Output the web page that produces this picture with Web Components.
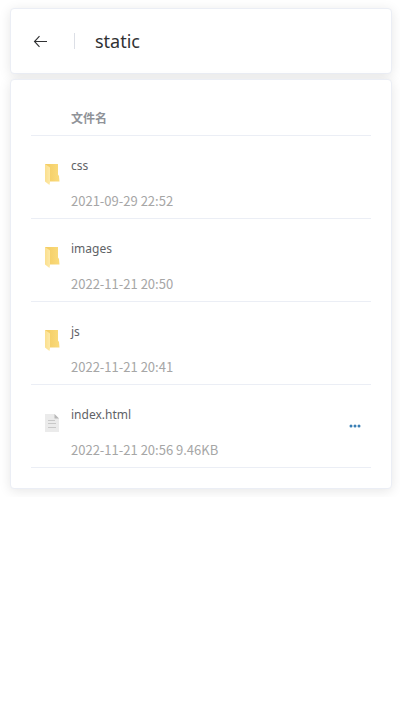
<!DOCTYPE html>
<html lang="zh-CN">
<head>
<meta charset="utf-8">
<meta name="viewport" content="width=device-width, initial-scale=1">
<title>static</title>
<style>
body { margin: 0; background: #fff; font: 13px/23px "Noto Sans CJK SC", "Noto Sans", sans-serif; color: #606266; }
</style>
</head>
<body>
<file-browser>
  <panel-card><page-header heading="static"></page-header></panel-card>
  <panel-card><file-table></file-table></panel-card>
</file-browser>
<script>
class BaseElement extends HTMLElement {
  render(html) {
    const template = document.createElement('template');
    template.innerHTML = html;
    this.attachShadow({ mode: 'open' }).append(template.content.cloneNode(true));
  }
}

customElements.define('file-browser', class extends BaseElement {
  constructor() {
    super();
    this.render(`<style>
      :host { display: block; padding: 8px 8px 8px 10px; }
      main { display: flex; flex-direction: column; gap: 5px; }
    </style><main><slot></slot></main>`);
  }
});

customElements.define('panel-card', class extends BaseElement {
  constructor() {
    super();
    this.render(`<style>
      :host { display: block; padding: 20px; background: #fff; border: 1px solid #ebeef5; border-radius: 4px; box-shadow: 0 2px 12px rgba(0,0,0,.1); }
    </style><slot></slot>`);
  }
});

customElements.define('page-header', class extends BaseElement {
  connectedCallback() {
    if (this.shadowRoot) return;
    this.render(`<style>
      :host { display: block; }
      header { display: flex; align-items: center; height: 24px; }
      button { display: flex; padding: 0; border: 0; background: none; color: #303133; cursor: pointer; }
      i { width: 1px; height: 16px; margin: 0 20px 0 24px; background: #dcdfe6; }
      h1 { margin: 0; font: 400 18px/24px "Noto Sans", "Noto Sans CJK SC", sans-serif; color: #303133; }
    </style>
    <header>
      <button type="button" aria-label="返回">
        <svg width="19" height="18" viewBox="0 0 19 18" fill="none" stroke="currentColor" stroke-width="1.1"><path d="M16 9.500H3.500M8.500 4.200 3.500 9.500l5 5.300"/></svg>
      </button>
      <i></i><h1></h1>
    </header>`);
    this.shadowRoot.querySelector('h1').textContent = this.getAttribute('heading');
  }
});

const ICONS = {
  folder: `<svg width="18" height="24" viewBox="0 0 18 24">
    <defs><linearGradient id="b" x2="1"><stop stop-color="#f3cb62"/><stop offset="1" stop-color="#fadb7c"/></linearGradient>
    <linearGradient id="f" x2="1"><stop stop-color="#fbdf8e"/><stop offset="1" stop-color="#fde9a8"/></linearGradient></defs>
    <path d="M2 2h13v10.500l1 1.500.5 5.500H4z" fill="url(#b)"/>
    <path d="M2 2l5 3.500v15L6.500 23 2 19.500z" fill="url(#f)"/></svg>`,
  file: `<svg width="18" height="24" viewBox="0 0 18 24">
    <path d="M2 3h9.500L16 7.500V21H2z" fill="#ebebeb"/><path d="M11.500 3L16 7.500h-4.500z" fill="#b8b8b8"/>
    <path d="M5 9.500h7M5 12.500h8M5 16.500h8" stroke="#c8c8c8"/></svg>`
};

customElements.define('file-icon', class extends BaseElement {
  connectedCallback() {
    if (this.shadowRoot) return;
    this.render(`<style>:host { display: block; } svg { display: block; }</style>${ICONS[this.getAttribute('kind')]}`);
  }
});

const FILES = [
  { kind: 'folder', name: 'css', meta: '2021-09-29 22:52' },
  { kind: 'folder', name: 'images', meta: '2022-11-21 20:50' },
  { kind: 'folder', name: 'js', meta: '2022-11-21 20:41' },
  { kind: 'file', name: 'index.html', meta: '2022-11-21 20:56 9.46KB' }
];

customElements.define('file-table', class extends BaseElement {
  constructor() {
    super();
    this.render(`<style>
      :host { display: block; }
      table { width: 100%; border-collapse: separate; border-spacing: 0; table-layout: fixed; }
      th, td { padding: 0; border-bottom: 1px solid #ebeef5; text-align: left; }
      th { padding: 6px 0; color: #909399; font-size: 12px; line-height: 23px; }
      .icon { width: 40px; }
      .more { width: 32px; }
      td { vertical-align: top; }
      td:first-child { padding: 26px 0 0 12px; }
      td:nth-child(2) { padding: 18px 0 6px; }
      td:last-child { vertical-align: middle; }
      a { display: block; color: #606266; text-decoration: none; font-family: "Noto Sans", "Noto Sans CJK SC", sans-serif; font-size: 12px; }
      p { margin: 12px 0 0; color: #a6a6a6; }
      button { display: flex; padding: 8px 10px; border: 0; background: none; color: #3a7fb5; cursor: pointer; }
    </style>
    <table>
      <thead><tr><th class="icon"></th><th scope="col">文件名</th><th class="more"></th></tr></thead>
      <tbody>${FILES.map(f => `<tr>
        <td><file-icon kind="${f.kind}"></file-icon></td>
        <td><a href="#${f.name}">${f.name}</a><p>${f.meta}</p></td>
        <td>${f.kind === 'file' ? `<button type="button" aria-label="更多"><svg width="12" height="4" viewBox="0 0 12 4" fill="currentColor"><circle cx="2" cy="2" r="1.500"/><circle cx="6" cy="2" r="1.500"/><circle cx="10" cy="2" r="1.500"/></svg></button>` : ''}</td>
      </tr>`).join('')}</tbody>
    </table>`);
  }
});
</script>
</body>
</html>
